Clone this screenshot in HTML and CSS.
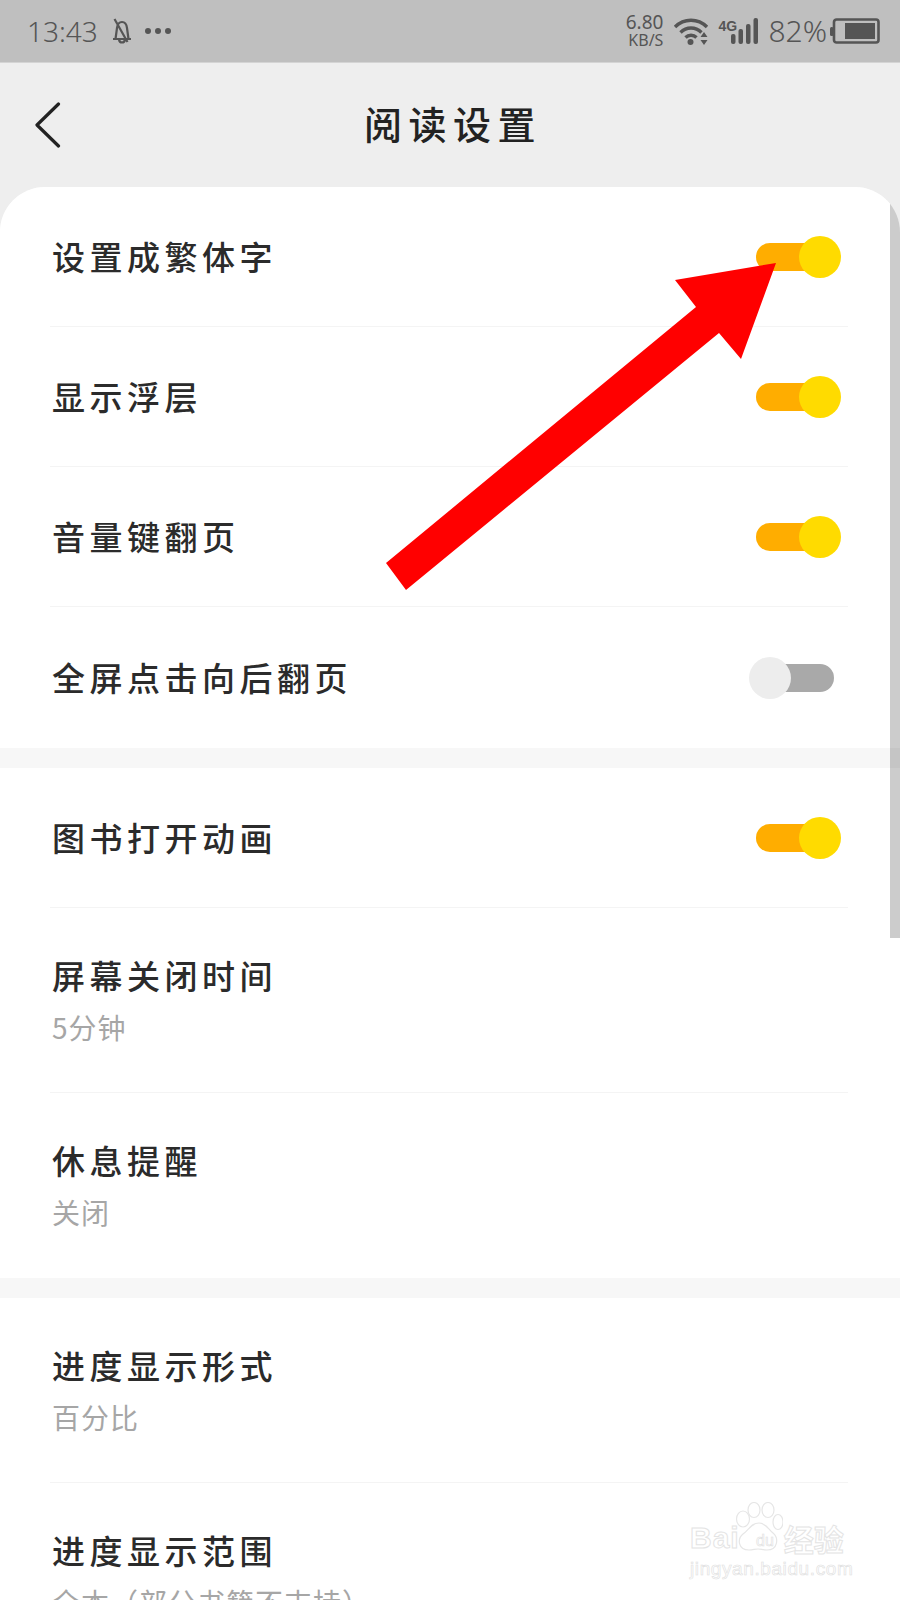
FILE: index.html
```html
<!DOCTYPE html>
<html lang="zh">
<head>
<meta charset="utf-8">
<title>阅读设置</title>
<link rel="stylesheet" href="styles.css">
</head>
<body>
<div class="page">
  <header class="status">
    <div class="status-left">
      <span class="time">13:43</span>
      <svg class="bell" width="20" height="26" viewBox="0 0 20 26" fill="none" stroke="#555" stroke-width="2.2"><path d="M1 21h18M3.500 21l1.500-11c.5-4 2.500-6 5-6s4.500 2 5 6l1.500 11M7 21.500c.3 2 1.500 3 3 3s2.700-1 3-3M2.500 1l13 23"/></svg>
      <span class="dots"><i></i><i></i><i></i></span>
    </div>
    <div class="status-right">
      <div class="speed"><span>6.80</span><span class="unit">KB/S</span></div>
      <svg class="wifi" width="36" height="28" viewBox="0 0 36 28" fill="none" stroke="#555" stroke-width="3.4"><path d="M2 10C11 1 25 1 34 10M7.500 15.500c6-6 15-6 21 0M12.500 20.500c3-3 8-3 11 0"/><circle cx="17.500" cy="25" r="3" fill="#555" stroke="none"/><path d="M31 15l-3.500 5h7zM31 28l-3.500-5h7z" fill="#555" stroke="none"/></svg>
      <div class="signal">
        <span class="net">4G</span>
        <svg class="bars" width="27" height="26" viewBox="0 0 27 26" fill="#555"><rect x="0" y="16" width="4.500" height="10" rx="2"/><rect x="7.500" y="11" width="4.500" height="15" rx="2"/><rect x="15" y="6" width="4.500" height="20" rx="2"/><rect x="22.500" y="0" width="4.500" height="26" rx="2"/></svg>
      </div>
      <span class="battery-text">82%</span>
      <svg class="battery" width="50" height="26" viewBox="0 0 50 26"><rect x="0" y="9" width="3.500" height="9" rx="1.500" fill="#555"/><rect x="4" y="1.500" width="44.500" height="23" rx="2.500" fill="none" stroke="#555" stroke-width="2.600"/><rect x="15" y="5" width="30" height="16" fill="#555"/></svg>
    </div>
  </header>

  <nav class="nav">
    <svg class="back" width="26" height="46" viewBox="0 0 26 46" fill="none" stroke="#222" stroke-width="3.200" stroke-linecap="round" stroke-linejoin="round"><path d="M23.500 2 2 23l21.500 21"/></svg>
    <h1 class="title">阅读设置</h1>
  </nav>

  <main class="card">
    <section class="group">
      <div class="row"><span class="label">设置成繁体字</span><span class="switch on"></span></div>
      <div class="row"><span class="label">显示浮层</span><span class="switch on"></span></div>
      <div class="row"><span class="label">音量键翻页</span><span class="switch on"></span></div>
      <div class="row"><span class="label">全屏点击向后翻页</span><span class="switch off"></span></div>
    </section>
    <section class="group">
      <div class="row"><span class="label">图书打开动画</span><span class="switch on"></span></div>
      <div class="row tall"><span class="label">屏幕关闭时间</span><span class="sub">5分钟</span></div>
      <div class="row tall"><span class="label">休息提醒</span><span class="sub">关闭</span></div>
    </section>
    <section class="group">
      <div class="row tall"><span class="label">进度显示形式</span><span class="sub">百分比</span></div>
      <div class="row tall"><span class="label">进度显示范围</span><span class="sub">全本（部分书籍不支持）</span></div>
    </section>
    <div class="scrollbar"></div>
  </main>

  <svg class="arrow" width="900" height="1600" viewBox="0 0 900 1600"><polygon fill="#ff0000" points="776,263 741,359 719,333 406,590 386,563 696,307 675,280"/></svg>

  <div class="mark">
    <div class="mark-top">
      <span class="mark-bai">Bai</span>
      <svg class="paw" width="48" height="54" viewBox="0 0 48 54" fill="#fff" stroke="#e6e6e6" stroke-width="1.200"><ellipse cx="8" cy="17" rx="6.500" ry="8"/><ellipse cx="19" cy="8" rx="6" ry="7.500"/><ellipse cx="33" cy="8" rx="6" ry="7.500"/><ellipse cx="43" cy="20" rx="5" ry="7.500"/><path d="M24 21c7 0 9 6 14 10 6 5 5 17-6 17-4 0-6-1-9-1s-5 1-9 1C3 48 2 37 8 32c6-4 8-11 16-11z"/></svg>
      <span class="mark-du">du</span>
      <span class="mark-cn">经验</span>
    </div>
    <div class="mark-url">jingyan.baidu.com</div>
  </div>
</div>
</body>
</html>
```
FILE: styles.css
```css
* { box-sizing: border-box; }
html, body { margin: 0; padding: 0; background: #fff; }
.page {
  position: relative;
  width: 900px;
  height: 1600px;
  overflow: hidden;
  background: #eee;
  font-family: "Noto Sans CJK SC", "Noto Sans", sans-serif;
  text-spacing-trim: space-all;
}
.status {
  height: 63px;
  background: #bfbfbf;
  border-bottom: 1px solid #d4d4d4;
  display: flex;
  justify-content: space-between;
  align-items: center;
  padding: 0 20px 0 27px;
  color: #555;
}
.status-left { display: flex; align-items: center; }
.time { font-family: "Noto Sans", sans-serif; font-weight: 300; font-size: 28px; line-height: 1; }
.bell { margin-left: 14px; }
.dots { display: flex; gap: 4px; margin-left: 13px; margin-top: -1px; }
.dots i { width: 6px; height: 6px; border-radius: 50%; background: #555; }
.status-right { display: flex; align-items: center; }
.speed {
  display: flex;
  flex-direction: column;
  align-items: flex-end;
  font-family: "Noto Sans", sans-serif;
  font-size: 19px;
  line-height: 19px;
  margin-top: -1px;
}
.unit { font-size: 16px; line-height: 16px; }
.wifi { margin-left: 10px; }
.signal { display: flex; align-items: flex-end; margin-left: 9px; width: 40px; position: relative; justify-content: flex-end; }
.net { position: absolute; left: 0; top: 1px; font-family: "Liberation Sans", sans-serif; font-weight: 700; font-size: 14px; line-height: 14px; }
.bars { display: block; }
.battery-text { font-family: "Noto Sans", sans-serif; font-weight: 300; font-size: 30px; line-height: 1; margin-left: 10px; }
.battery { margin-left: 3px; }

.nav {
  height: 124px;
  position: relative;
  display: flex;
  align-items: center;
  justify-content: center;
  padding-bottom: 5px;
}
.back { position: absolute; left: 35px; top: 39px; }
.title { margin: 0; font-size: 38px; font-weight: 500; letter-spacing: 6.500px; color: #222; line-height: 1.2; padding-left: 6px; }

.card {
  position: relative;
  background: #f7f7f7;
  border-radius: 45px 45px 0 0;
  overflow: hidden;
  height: 1413px;
  display: flex;
  flex-direction: column;
  gap: 20px;
}
.group { background: #fff; padding: 0 52px 0 50px; }
.row {
  height: 140px;
  display: flex;
  align-items: center;
  justify-content: space-between;
  border-bottom: 1px solid #f4f4f4;
  padding-left: 2px;
}
.row:last-child { border-bottom: 0; }
.group:first-child .row:last-child { height: 141px; }
.row .label { margin-bottom: 2px; }
.row.tall {
  height: 185px;
  flex-direction: column;
  align-items: flex-start;
  justify-content: flex-start;
  padding-top: 45px;
}
.row.tall .label { margin-bottom: 0; }
.label { font-size: 33px; font-weight: 500; letter-spacing: 4.500px; line-height: 44px; color: #2b2b2b; }
.sub { font-size: 28px; letter-spacing: 1px; line-height: 40px; margin-top: 10px; color: #a6a6a6; }

.switch { position: relative; display: block; width: 92px; height: 42px; margin-right: 7px; }
.switch::before {
  content: "";
  position: absolute;
  top: 7px;
  height: 28px;
  width: 78px;
  border-radius: 14px;
}
.switch::after {
  content: "";
  position: absolute;
  top: 0;
  width: 42px;
  height: 42px;
  border-radius: 50%;
}
.switch.on::before { left: 7px; background: #ffad00; }
.switch.on::after { right: 0; background: #ffdb00; }
.switch.off::before { right: 7px; background: #a9a9a9; }
.switch.off::after { left: 0; background: #ededed; }

.scrollbar { position: absolute; right: 0; top: 0; width: 10px; height: 751px; background: rgba(0, 0, 0, 0.2); }

.arrow { position: absolute; left: 0; top: 0; pointer-events: none; }

.mark { position: absolute; left: 690px; top: 1500px; width: 165px; }
.mark-top { display: flex; align-items: flex-end; height: 56px; position: relative; }
.mark-bai, .mark-du, .mark-cn, .mark-url { color: #fff; -webkit-text-stroke: 1px #e4e4e4; font-family: "Liberation Sans", sans-serif; }
.mark-bai { font-size: 30px; font-weight: 700; line-height: 36px; letter-spacing: 1px; }
.paw { margin-left: -5px; }
.mark-du { position: absolute; left: 66px; bottom: 6px; font-size: 16px; line-height: 18px; -webkit-text-stroke: 0.6px #e0e0e0; }
.mark-cn { font-family: "Noto Sans CJK SC", sans-serif; font-size: 30px; line-height: 36px; font-weight: 700; margin-left: 1px; white-space: nowrap; }
.mark-url { font-size: 19px; line-height: 22px; letter-spacing: 0.6px; margin-top: 2px; white-space: nowrap; -webkit-text-stroke: 0.6px #dedede; }
```
